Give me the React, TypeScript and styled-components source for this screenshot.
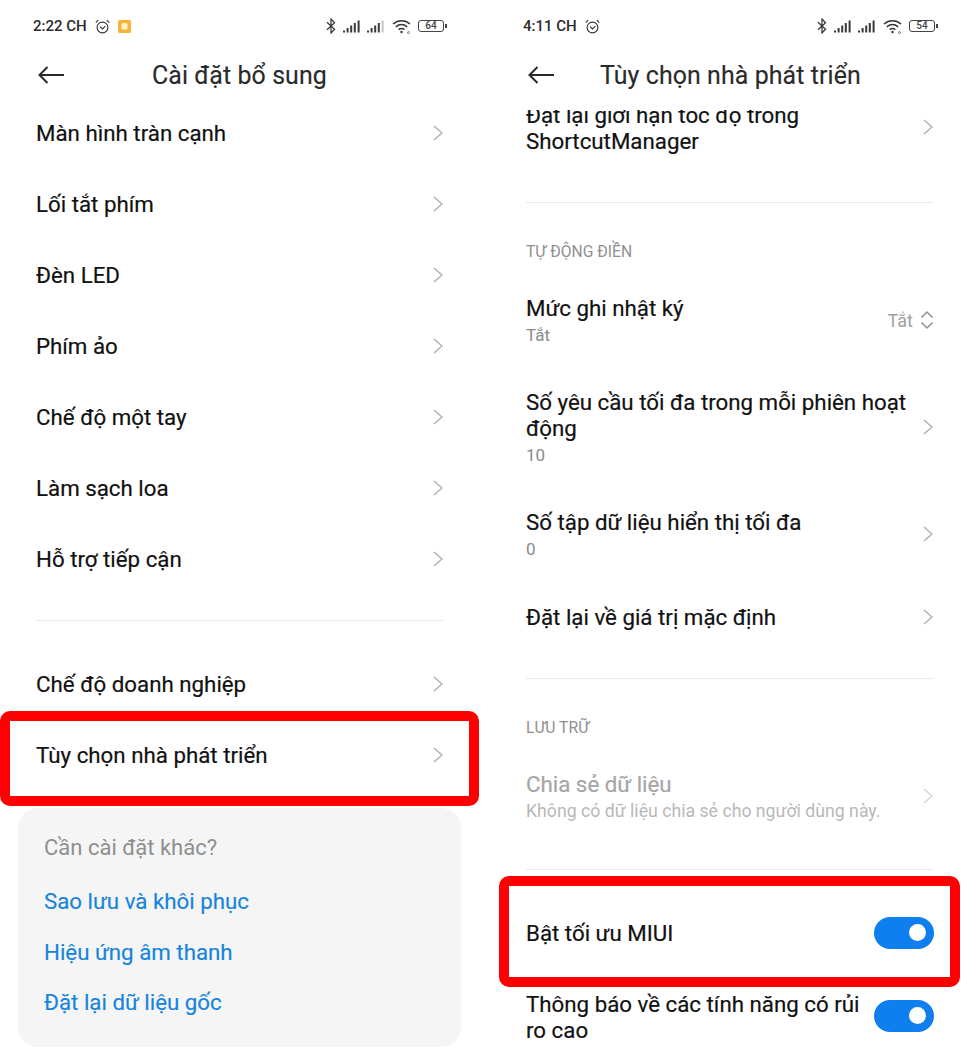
import React from 'react'
import styled, { createGlobalStyle } from 'styled-components'

const GlobalStyle = createGlobalStyle`
	html, body {
		margin: 0;
		padding: 0;
		background: #fff;
		overflow: hidden;
	}
	body {
		font-family: Roboto, "Noto Sans", sans-serif;
		color: #111;
	}
`

const Page = styled.div`
	width: 979px;
	height: 1064px;
	display: grid;
	grid-template-columns: 490px 490px;
	overflow: hidden;
`

const Screen = styled.div`
	display: flex;
	flex-direction: column;
	min-width: 0;
	height: 1064px;
`

const StatusBar = styled.div<{ $right: number }>`
	height: 52px;
	flex: none;
	padding: 0 ${p => p.$right}px 0 33px;
	display: flex;
	align-items: center;
	gap: 8px;
	font-size: 15px;
	font-weight: 500;
	color: #2b2b2b;
	box-sizing: border-box;
`

const StatusRight = styled.div`
	margin-left: auto;
	display: flex;
	align-items: center;
	gap: 6.5px;
`

const NavBar = styled.div`
	height: 46px;
	flex: none;
	padding-left: 38px;
	display: flex;
	align-items: center;
`

const NavTitle = styled.div<{ $offset: number }>`
	margin-left: ${p => p.$offset}px;
	font-size: 24.9px;
	letter-spacing: 0.1px;
	color: #2a2a2a;
	-webkit-text-stroke: 0.15px #2a2a2a;
`

const ScrollArea = styled.div<{ $top: number }>`
	flex: 1;
	min-height: 0;
	overflow: hidden;
	margin-top: ${p => p.$top}px;
	padding: 0 47px 0 36px;
`

const Row = styled.div<{ $height: number; $mt?: number }>`
	position: relative;
	height: ${p => p.$height}px;
	margin-top: ${p => p.$mt ?? 0}px;
	display: flex;
	align-items: center;
	justify-content: space-between;
`

const RowText = styled.div`
	min-width: 0;
	flex: 1;
	padding-right: 8px;
`

const RowTitle = styled.div<{ $muted?: boolean }>`
	font-size: 22.3px;
	line-height: 26px;
	color: ${p => (p.$muted ? '#a6a6a6' : '#111')};
	-webkit-text-stroke: 0.2px ${p => (p.$muted ? '#a6a6a6' : '#111')};
`

const RowSub = styled.div<{ $light?: boolean }>`
	font-size: ${p => (p.$light ? 17.7 : 17)}px;
	line-height: 21px;
	margin-top: 4px;
	white-space: nowrap;
	color: ${p => (p.$light ? '#b8b8b8' : '#8a8a8a')};
`

const Divider = styled.div<{ $top: number; $bottom?: number }>`
	height: 1px;
	background: #e8e8e8;
	margin: ${p => p.$top}px 0 ${p => p.$bottom ?? 0}px;
`

const SectionLabel = styled.div`
	height: 40px;
	display: flex;
	align-items: center;
	font-size: 15.7px;
	color: #8f8f8f;
`

const RedFrame = styled.div<{ $left: number; $right: number; $top: number; $bottom: number }>`
	position: absolute;
	left: ${p => p.$left}px;
	right: ${p => p.$right}px;
	top: ${p => p.$top}px;
	bottom: ${p => p.$bottom}px;
	z-index: 2;
	border: 10px solid #fe0000;
	border-radius: 10px;
	pointer-events: none;
`

const HelpCard = styled.div`
	margin: 18px -18px 0;
	height: 239px;
	box-sizing: border-box;
	padding: 27px 26px 0;
	background: #f5f5f5;
	border-radius: 20px;
`

const HelpTitle = styled.div`
	font-size: 22px;
	line-height: 26px;
	color: #8f8f8f;
	padding-bottom: 2.5px;
`

const HelpLink = styled.a`
	display: block;
	font-size: 22.3px;
	line-height: 26px;
	color: #1584dc;
	margin-top: 24.5px;
	-webkit-text-stroke: 0.15px #1584dc;
`

const ValueWrap = styled.div`
	display: flex;
	align-items: center;
	gap: 7px;
	margin-right: -1px;
`

const ValueText = styled.span`
	font-size: 18px;
	color: #a0a0a0;
`

const Toggle = styled.div<{ $lift?: number }>`
	width: 60px;
	height: 32px;
	flex: none;
	margin: 0 -1px ${p => p.$lift ?? 0}px 0;
	border-radius: 16px;
	background: #0f7ff0;
	display: flex;
	align-items: center;
	justify-content: flex-end;
	padding-right: 8px;
	box-sizing: border-box;

	&::after {
		content: '';
		width: 17px;
		height: 17px;
		border-radius: 50%;
		background: #fff;
	}
`

const ClippedRow = styled(Row)`
	align-items: flex-start;

	svg {
		margin-top: 17px;
	}
`

const IconSvg = styled.svg`
	display: block;
	flex: none;
`

const BatteryWrap = styled.div`
	margin-right: 2px;
`

const BatteryBody = styled.div`
	width: 26px;
	height: 12px;
	box-sizing: border-box;
	border: 1.2px solid #444;
	border-radius: 3px;
	font-size: 10px;
	line-height: 10px;
	text-align: center;
	color: #444;
	position: relative;

	&::after {
		content: '';
		position: absolute;
		right: -4px;
		top: 2.5px;
		width: 2px;
		height: 4px;
		background: #444;
	}
`

const Chevron: React.FC<{ light?: boolean }> = ({ light }) => (
	<IconSvg width="10" height="16" viewBox="0 0 10 16" fill="none">
		<path d="M1 1 L9 8 L1 15" stroke={light ? '#d6d6d6' : '#b0b0b0'} strokeWidth="1.5" />
	</IconSvg>
)

const BackArrow = () => (
	<IconSvg width="26" height="18" viewBox="0 0 26 18" fill="none">
		<path d="M9.5 1 L1.5 9 L9.5 17 M1.5 9 H26" stroke="#2a2a2a" strokeWidth="2" />
	</IconSvg>
)

const Stepper = () => (
	<IconSvg width="14" height="20" viewBox="0 0 14 20" fill="none">
		<path d="M1.5 7.5 L7 2 L12.5 7.5 M1.5 12.5 L7 18 L12.5 12.5" stroke="#8f8f8f" strokeWidth="1.5" />
	</IconSvg>
)

const Alarm = () => (
	<IconSvg width="15" height="15" viewBox="0 0 15 15" fill="none" stroke="#333" strokeWidth="1.1">
		<circle cx="7.5" cy="8.5" r="5.4" />
		<path d="M5 7.6 L7.5 10 L10.4 7.2 M0.8 3.6 L3.2 1.2 M14.2 3.6 L11.8 1.2" />
	</IconSvg>
)

const NoteBadge = () => (
	<IconSvg width="13" height="13" viewBox="0 0 13 13">
		<rect width="13" height="13" rx="1.5" fill="#f7b23b" />
		<rect x="3.5" y="3" width="6" height="6.5" rx="1.5" fill="#fff2c9" />
	</IconSvg>
)

const Bluetooth = () => (
	<IconSvg width="10" height="16" viewBox="0 0 10 16" fill="none" stroke="#333" strokeWidth="1.2">
		<path d="M1 4.2 L8.6 11.2 L5 15 V1 L8.6 4.8 L1 11.8" />
	</IconSvg>
)

const Signal: React.FC<{ weak?: boolean }> = ({ weak }) => (
	<IconSvg width="18" height="13" viewBox="0 0 18 13" fill="#3a3a3a">
		<rect x="0" y="10.5" width="2" height="2" />
		<rect x="3.6" y="8" width="2" height="4.5" />
		<rect x="7.2" y="5.5" width="2" height="7" />
		<rect x="10.8" y="3" width="2" height="9.5" />
		<rect x="14.6" y="0.5" width="2" height="12" fill={weak ? '#c4c4c4' : '#3a3a3a'} />
	</IconSvg>
)

const Wifi = () => (
	<IconSvg width="20" height="15" viewBox="0 0 20 15" fill="none" stroke="#333" strokeWidth="1.5">
		<path d="M1 5 C6 0.6 13 0.6 18 5 M3.8 7.8 C7.3 5 11.7 5 15.2 7.8 M6.6 10.6 C8.4 9.2 10.6 9.2 12.4 10.6" />
		<circle cx="9.5" cy="13" r="1.2" fill="#333" stroke="none" />
		<circle cx="16.5" cy="13.6" r="1" fill="none" strokeWidth="0.6" />
	</IconSvg>
)

const StatusIcons: React.FC<{ level: string; weak?: boolean }> = ({ level, weak }) => (
	<StatusRight>
		<Bluetooth />
		<Signal />
		<Signal weak={weak} />
		<Wifi />
		<BatteryWrap>
			<BatteryBody>{level}</BatteryBody>
		</BatteryWrap>
	</StatusRight>
)

const leftRows = ['Màn hình tràn cạnh', 'Lối tắt phím', 'Đèn LED', 'Phím ảo', 'Chế độ một tay', 'Làm sạch loa', 'Hỗ trợ tiếp cận']

export default function App() {
	return (
		<>
			<GlobalStyle />
			<Page>
				<Screen>
					<StatusBar $right={44}>
						2:22 CH
						<Alarm />
						<NoteBadge />
						<StatusIcons level="64" weak />
					</StatusBar>
					<NavBar>
						<BackArrow />
						<NavTitle $offset={88}>Cài đặt bổ sung</NavTitle>
					</NavBar>
					<ScrollArea $top={-1}>
						{leftRows.map(title => (
							<Row key={title} $height={71}>
								<RowTitle>{title}</RowTitle>
								<Chevron />
							</Row>
						))}
						<Divider $top={26} $bottom={27} />
						<Row $height={71}>
							<RowTitle>Chế độ doanh nghiệp</RowTitle>
							<Chevron />
						</Row>
						<Row $height={71}>
							<RowTitle>Tùy chọn nhà phát triển</RowTitle>
							<Chevron />
							<RedFrame $left={-36} $right={-36} $top={-8} $bottom={-16} />
						</Row>
						<HelpCard>
							<HelpTitle>Cần cài đặt khác?</HelpTitle>
							<HelpLink>Sao lưu và khôi phục</HelpLink>
							<HelpLink>Hiệu ứng âm thanh</HelpLink>
							<HelpLink>Đặt lại dữ liệu gốc</HelpLink>
						</HelpCard>
					</ScrollArea>
				</Screen>

				<Screen>
					<StatusBar $right={43}>
						4:11 CH
						<Alarm />
						<StatusIcons level="54" />
					</StatusBar>
					<NavBar>
						<BackArrow />
						<NavTitle $offset={46}>Tùy chọn nhà phát triển</NavTitle>
					</NavBar>
					<ScrollArea $top={12}>
						<ClippedRow $height={52} $mt={-8}>
							<RowText>
								<RowTitle>Đặt lại giới hạn tốc độ trong ShortcutManager</RowTitle>
							</RowText>
							<Chevron />
						</ClippedRow>
						<Divider $top={48} $bottom={28} />

						<SectionLabel>TỰ ĐỘNG ĐIỀN</SectionLabel>
						<Row $height={50} $mt={24}>
							<RowText>
								<RowTitle>Mức ghi nhật ký</RowTitle>
								<RowSub>Tắt</RowSub>
							</RowText>
							<ValueWrap>
								<ValueText>Tắt</ValueText>
								<Stepper />
							</ValueWrap>
						</Row>
						<Row $height={76} $mt={44}>
							<RowText>
								<RowTitle>Số yêu cầu tối đa trong mỗi phiên hoạt động</RowTitle>
								<RowSub>10</RowSub>
							</RowText>
							<Chevron />
						</Row>
						<Row $height={50} $mt={44}>
							<RowText>
								<RowTitle>Số tập dữ liệu hiển thị tối đa</RowTitle>
								<RowSub>0</RowSub>
							</RowText>
							<Chevron />
						</Row>
						<Row $height={26} $mt={45}>
							<RowText>
								<RowTitle>Đặt lại về giá trị mặc định</RowTitle>
							</RowText>
							<Chevron />
						</Row>
						<Divider $top={48} $bottom={28} />

						<SectionLabel>LƯU TRỮ</SectionLabel>
						<Row $height={50} $mt={24}>
							<RowText>
								<RowTitle $muted>Chia sẻ dữ liệu</RowTitle>
								<RowSub $light>Không có dữ liệu chia sẻ cho người dùng này.</RowSub>
							</RowText>
							<Chevron light />
						</Row>
						<Divider $top={48} />

						<Row $height={33} $mt={46}>
							<RowText>
								<RowTitle>Bật tối ưu MIUI</RowTitle>
							</RowText>
							<Toggle />
							<RedFrame $left={-27} $right={-27} $top={-40} $bottom={-38} />
						</Row>
						<Row $height={52} $mt={42}>
							<RowText>
								<RowTitle>Thông báo về các tính năng có rủi ro cao</RowTitle>
							</RowText>
							<Toggle $lift={3} />
						</Row>
					</ScrollArea>
				</Screen>
			</Page>
		</>
	)
}
